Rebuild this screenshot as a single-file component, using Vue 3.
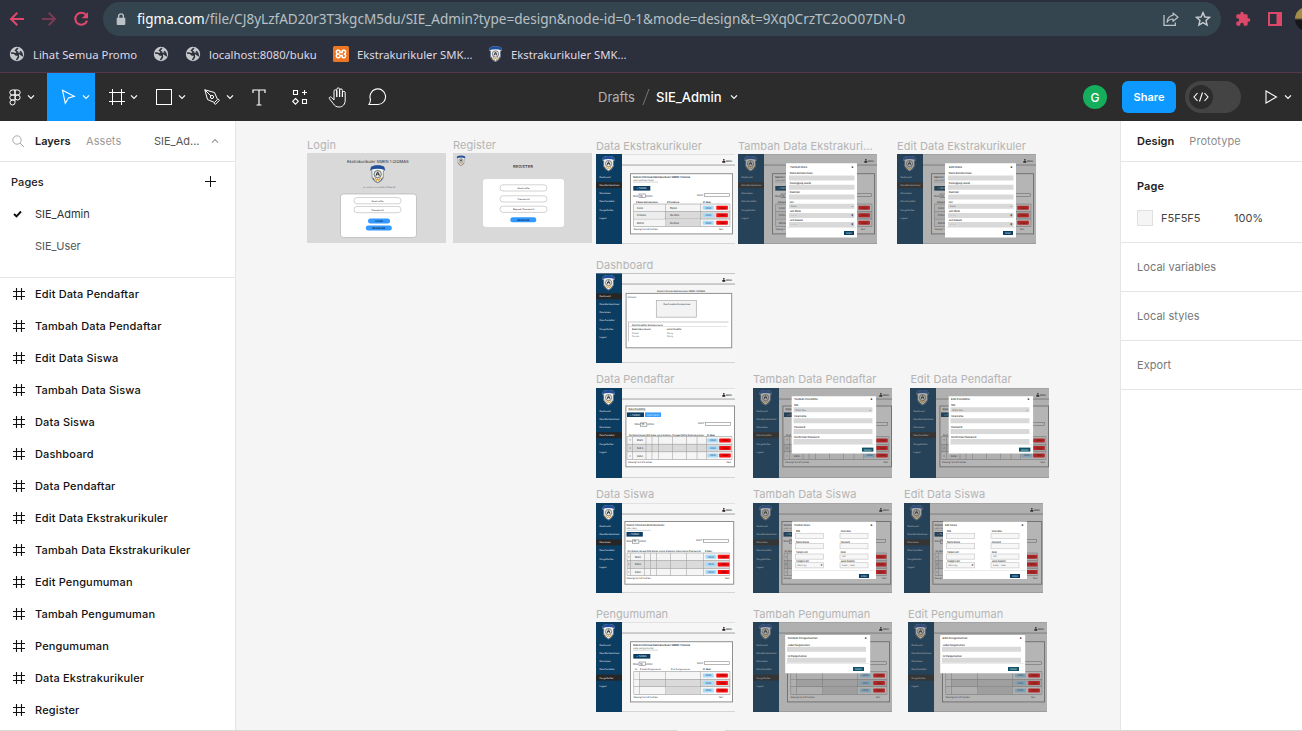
<script setup>
const layers = [
  'Edit Data Pendaftar', 'Tambah Data Pendaftar', 'Edit Data Siswa', 'Tambah Data Siswa',
  'Data Siswa', 'Dashboard', 'Data Pendaftar', 'Edit Data Ekstrakurikuler',
  'Tambah Data Ekstrakurikuler', 'Edit Pengumuman', 'Tambah Pengumuman', 'Pengumuman',
  'Data Ekstrakurikuler', 'Register'
]

const NAVY = '#0b3c61'
const GREY = '#d9d9d9'
const MENU = ['Dashboard', 'Data Ekstrakurikuler', 'Data Siswa', 'Data Pendaftar', 'Pengumuman', 'Logout']
const MENU_W = [11, 20, 11, 15, 14, 7]
const MENU_Y = [23.3, 31.2, 39.4, 47.2, 55.6, 63.6]

// Shape helpers: r = rectangle, t = text
const r = (x, y, w, h, f, extra = {}) => ({ k: 'r', x, y, w, h, f, s: 'none', rx: 0, ...extra })
const t = (x, y, v, w, extra = {}) => ({ k: 't', x, y, v, w, f: '#222', z: 2.7, b: 400, ...extra })

function shell(active) {
  const out = [
    r(0, 0, 139, 90, '#f6f6f6'),
    r(26, 0, 113, 0.5, '#ccc'),
    r(26, 10.6, 113, 0.9, '#999'),
    r(26, 89.2, 113, 0.8, '#ccc'),
    r(0, 0, 26, 90, NAVY),
    r(0, MENU_Y[active] - 3, 26, 6, '#262626'),
    r(127, 5, 1.7, 1.7, '#222', { rx: 0.8 }),
    r(126.3, 7, 3, 1.8, '#222', { rx: 0.4 }),
    t(130, 7.6, 'Admin', 6, { b: 600 })
  ]
  MENU.forEach((m, i) => out.push(t(3.5, MENU_Y[i] + 0.9, m, MENU_W[i], { f: '#f0f5fa', z: 2.5 })))
  out.push({ k: 'logo', x: 6, y: 1.8, h: 15.6 })
  return out
}
const panel = (x, y, w, h) => [
  r(x + 0.5, y + 0.5, w - 1, h - 1, '#fff', { s: '#8f8f8f' })
]

function table(c) {
  const out = []
  const [y0, y1, y2, y3] = c.rows
  const x0 = c.cols[0]
  const x1 = c.cols[c.cols.length - 1]
  out.push(r(x0, y0, x1 - x0, y3 - y0, '#f5f5f5'))
  out.push(r(x0, y1, x1 - x0, y2 - y1, '#dadada'))
  c.rows.forEach(y => out.push(r(x0, y - 0.3, x1 - x0, 0.6, '#999')))
  c.cols.forEach(x => out.push(r(x - 0.25, y0, 0.5, y3 - y0, '#999')))
  ;[[y0, y1], [y1, y2], [y2, y3]].forEach(([a, b]) => {
    const y = (a + b) / 2 - 2
    out.push(r(c.bx[0], y, 11, 4, '#a9dcfb', { rx: 0.7 }))
    out.push(t(c.bx[0] + 2.7, y + 2.9, 'Ubah', 6, { f: '#27465a' }))
    out.push(r(c.bx[1], y, 11.6, 4, '#fb0d0d', { rx: 0.7 }))
    out.push(t(c.bx[1] + 2.7, y + 2.9, 'Hapus', 6.4, { f: '#4d0000' }))
  })
  return out
}

function entries(x, y, sx) {
  return [
    t(x, y + 1, 'Show', 5.4), r(x + 6, y - 1.5, 6.4, 3.3, '#fff', { s: '#777', sw: 0.6 }),
    t(x + 7, y + 1, '10', 2.6), t(x + 13, y + 1, 'entries', 6.6),
    t(sx, y, 'Search:', 6.5), r(sx + 7.6, y - 1.8, 25, 2.8, '#fff', { s: '#888', sw: 0.6 })
  ]
}

function infoPage(active, extra) {
  return [
    ...shell(active), ...panel(34, 19.2, 103, 61.2),
    t(37, 24.2, 'Sistem Informasi Ekstrakurikuler SMKN 1 Ciomas', 57, { b: 600 }),
    t(37, 27, extra.sub, 21, { z: 2.2, f: '#666' }), r(37, 27.8, 25, 0.5, '#aaa'),
    r(37.3, 32, 17, 4.6, NAVY), t(40.5, 35.3, '+ Tambah', 10, { f: '#fff' }),
    ...entries(37, 41.5, 101), ...extra.body,
    t(37.5, 76, 'Showing 1 to 3 of 3 entries', 24, { z: 2.3 }), t(123, 76, 'Next', 4, { z: 2.3 })
  ]
}

function ekstra() {
  const body = [
    t(40, 48.6, '# Nama Ekstrakurikuler', 22, { b: 600, z: 2.4 }), t(71, 48.6, '# Pembina', 12, { b: 600, z: 2.4 }), t(107, 48.6, '# Aksi', 8, { b: 600, z: 2.4 }),
    ...table({ rows: [50, 57.5, 65, 72.4], cols: [37.6, 69.3, 104.5, 134], bx: [106.8, 120.3] }),
    r(37.9, 57.8, 31, 7, '#ededed'),
    r(69.6, 65.3, 34.7, 6.8, GREY)
  ]
  ;['Futsal', 'Pramuka', 'Rohis'].forEach((v, i) => body.push(t(41, 54.7 + i * 7.7, v, [6, 9, 7][i])))
  ;['Bapak', 'Ibu Rina', 'Ibu Dewi'].forEach((v, i) => body.push(t(74, 54.7 + i * 7.7, v, [7, 9, 9][i])))
  return infoPage(1, { sub: 'Data Ekstrakurikuler', body })
}

function pengumuman() {
  return infoPage(4, {
    sub: 'Data Pengumuman',
    body: [
      t(39, 48.2, 'No.', 3, { z: 2.4 }), t(44, 48.2, '# Judul Pengumuman', 21, { z: 2.4 }), t(75, 48.2, '# Isi Pengumuman', 19, { z: 2.4 }), t(107, 48.2, '# Aksi', 8, { b: 600, z: 2.4 }),
      ...table({ rows: [49.5, 57.3, 64.5, 72.4], cols: [37.8, 43.4, 69.4, 104.5, 134], bx: [106.8, 120.3] }),
      r(38.1, 57.6, 5, 6.6, '#f5f5f5'), r(69.7, 64.8, 34.5, 7.3, GREY)
    ]
  })
}

function pendaftar() {
  const cols = [31, 36.6, 50, 56, 62.5, 76.5, 90.5, 101, 110.5, 136]
  const out = [
    ...shell(3), ...panel(29.4, 17.5, 109.6, 61.8),
    t(32.5, 21.5, 'Data Pendaftar', 17, { b: 500 }), r(32, 22.4, 18, 0.4, '#aaa'),
    r(31, 24.4, 17, 4.6, NAVY), t(34, 27.7, '+ Tambah', 10, { f: '#fff' }),
    r(49, 24.4, 16, 4.6, '#3b9efc'), t(51, 27.7, 'Export Excel', 12, { f: '#cfe6ff' }),
    ...entries(38.5, 36.4, 102),
    t(33, 47.8, 'No  Nama Siswa   NIS   Kelas   Jenis Kelamin   Tanggal Daftar  Ekstrakurikuler', 75, { z: 2.4, b: 500 }), t(111, 47.8, '# Aksi', 8, { z: 2.4, b: 600 }),
    ...table({ rows: [48.6, 56.2, 63.8, 71.3], cols, bx: [111.2, 123.2] }),
    t(32, 75.4, 'Showing 1 to 3 of 3 entries', 24, { z: 2.3 }), t(130.5, 75.4, 'Next', 4.5, { z: 2.3 })
  ]
  ;['Rani', 'Budi A', 'Rudian'].forEach((v, i) => { out.push(t(33.5, 53.3 + i * 7.6, String(i + 1), 1)); out.push(t(41, 53.3 + i * 7.6, v, 6)) })
  return out
}

function siswa() {
  const cols = [31, 34.7, 48.5, 54.5, 60.5, 74.5, 90.5, 107.6, 133.5]
  const out = [
    ...shell(2), ...panel(28.4, 18, 109.8, 63.7),
    t(30.5, 23.2, 'Sistem Informasi Ekstrakurikuler', 38, { b: 500 }),
    t(30.5, 26, 'Data Siswa', 10, { z: 2.2, f: '#666' }), r(30.5, 26.9, 24, 0.5, '#aaa'),
    r(30.5, 29, 16.3, 4.6, NAVY), t(33, 32.3, '+ Tambah', 10, { f: '#fff' }),
    ...entries(30.5, 38.4, 100),
    t(31.5, 48.8, 'No  Nama Siswa   NIS   Kelas   Jenis Kelamin   Username      Password', 73, { z: 2.4, b: 500 }), t(109, 48.8, '# Aksi', 7, { z: 2.4, b: 600 }),
    ...table({ rows: [50, 57.6, 65.4, 72.4], cols, bx: [109.4, 121.8] }),
    t(30.5, 76, 'Showing 1 to 3 of 3 entries', 24, { z: 2.3 }), t(129, 76, 'Next', 4.5, { z: 2.3 })
  ]
  ;['Rani', 'Rizkia', 'Rudian'].forEach((v, i) => { out.push(t(32.3, 54.6 + i * 7.7, String(i + 1), 1)); out.push(t(39, 54.6 + i * 7.7, v, 6)) })
  return out
}

function dashboard() {
  return [
    ...shell(0), r(0, 0, 139, 0.5, '#aaa'),
    t(61, 19.3, 'Sistem Informasi Ekstrakurikuler SMKN 1 CIOMAS', 48, { b: 500, z: 2.4 }),
    ...panel(29.6, 19.9, 106.6, 55.4),
    t(31.5, 24.6, 'Dashboard', 8.5, { z: 2.3, f: '#555' }),
    r(60.3, 27.6, 40, 16.6, '#f3f3f3', { s: '#aaa', sw: 0.7 }),
    t(67.5, 32, 'Data Pendaftar Ekstrakurikuler', 27, { z: 2.5 }),
    r(32, 48.7, 100.5, 0.6, '#aaa'), r(32, 48.7, 0.6, 19.5, '#aaa'), r(32, 53.5, 99, 0.5, '#ccc'),
    t(36, 52.6, 'Data Pendaftar Ekstrakurikuler', 31, { z: 2.4, b: 500 }),
    t(36, 56.6, 'Ekstrakurikuler', 19, { z: 2.4, b: 500 }), t(70.5, 56.6, 'Jumlah Pendaftar', 15, { z: 2.4, b: 500 }),
    t(36, 61, 'Futsal', 6.5, { z: 2.4, f: '#666' }), t(71, 61, 'Orang', 6, { z: 2.4, f: '#666' }),
    t(36, 64.3, 'Pramuka', 7, { z: 2.4, f: '#666' }), t(71, 64.3, 'Orang', 6, { z: 2.4, f: '#666' })
  ]
}

// Text behind a dialog is cut at the dialog's left edge, or dropped when it is fully covered
function clipText(s, m) {
  if (s.k !== 't' || s.y < m.y || s.y - 2 > m.y + m.h || s.x >= m.x + m.w || s.x + s.w <= m.x) return [s]
  const room = m.x - s.x
  if (room < 1.5) return []
  const n = Math.floor(s.v.length * room / s.w)
  return n < 1 ? [] : [{ ...s, v: s.v.slice(0, n).trimEnd(), w: n * s.w / s.v.length }]
}

function modal(base, m) {
  const out = [...base.flatMap(s => clipText(s, m)), { ...r(0, 0, 139, 90, '#4b4b4b'), o: 0.41 }, r(m.x, m.y, m.w, m.h, '#fff', { rx: 0.5 })]
  out.push(t(m.tx, m.ty, m.title, m.tw, { b: 500 }))
  out.push(t(m.x + m.w - 5.5, m.ty, 'x', 1.8, { b: 800, f: '#000', z: 3.3 }))
  m.fields.forEach(([x, y, w, label, lw, val, mark]) => {
    out.push(t(x + 0.8, y - 1.1, label, lw, { b: 500, z: 2.6 }))
    out.push(m.outline ? r(x, y, w, 5.2, '#f7f7f7', { s: '#c4c4c4', sw: 0.6 }) : r(x, y, w, 5, GREY, { rx: 0.3 }))
    if (val) out.push(t(x + 2, y + 3.2, val, val.length * 1.15, { z: 2.4, f: '#555' }))
    if (mark) out.push(t(x + w - 3.3, y + 3.4, mark, 2, { z: 3, f: '#333' }))
  })
  out.push(r(m.x + 1, m.b[1] - 3.6, m.w - 2, 0.4, '#ccc'))
  out.push(r(m.b[0], m.b[1], m.b[2], 4, m.b[3] || NAVY), t(m.b[0] + 2, m.b[1] + 2.9, 'Simpan', m.b[2] - 4, { f: '#dce8f0' }))
  return out
}

const ekstraModal = title => modal(ekstra(), {
  x: 48, y: 9.2, w: 71, h: 74.2, tx: 52, ty: 13.8, title, tw: title.length > 10 ? 17 : 13,
  fields: [
    [51, 21.4, 65.5, 'Nama Ekstrakurikuler', 23], [51, 30.8, 65.5, 'Penanggung Jawab', 21],
    [51, 40.4, 65.5, 'Deskripsi', 10], [51, 49.8, 65.5, 'Hari', 4, 'Senin', '⌄'],
    [51, 59, 65.5, 'Jam Mulai', 11, '--:--', '◉'], [51, 68, 65.5, 'Jam Selesai', 13, '--:--', '◉']
  ], b: [106, 77, 10]
})
const pendaftarModal = title => modal(pendaftar(), {
  x: 38.7, y: 8.2, w: 84.4, h: 57.2, tx: 41, ty: 12, title, tw: title.length > 15 ? 24 : 19,
  fields: [
    [40.5, 19.3, 79, 'NIS', 4, 'Pilih Nis', '⌄'], [40.5, 30.2, 79, 'Username', 12],
    [40.5, 40.9, 79, 'Password', 11], [40.5, 51, 79, 'Konfirmasi Password', 25]
  ], b: [109, 59.6, 11.4, '#0f5268']
})
const siswaModal = title => modal(siswa(), {
  x: 39, y: 18.4, w: 84, h: 57.6, tx: 41, ty: 23.2, title, tw: title.length > 10 ? 16 : 12, outline: true,
  fields: [
    [42.3, 30.3, 28.4, 'NIS', 4], [87, 30.3, 28, 'Username', 10],
    [42.3, 40.6, 28.4, 'Nama Siswa', 13], [87, 40.6, 28, 'Password', 9],
    [42.3, 51, 28.4, 'Tempat Lahir', 12], [87, 51, 28, 'Kelas', 5, 'XII'],
    [42.3, 59.7, 28.4, 'Tanggal Lahir', 13, 'dd/mm/yy', '▾'], [87, 59.7, 28, 'Jenis Kelamin', 14, 'Laki - laki']
  ], b: [106, 71, 10]
})
const umumModal = title => modal(pengumuman(), {
  x: 32.2, y: 13, w: 85, h: 38.2, tx: 34.5, ty: 17.2, title, tw: title.length > 15 ? 30 : 25,
  fields: [[34, 24.8, 79, 'Judul Pengumuman', 22], [34, 35.7, 79, 'Isi Pengumuman', 19]],
  b: [100, 45, 11, '#0f5268']
})

const pill = (x, y, w, label, lw) => [r(x, y, w, 6.2, '#fff', { rx: 3, s: '#b5b5b5', sw: 0.6 }), t(x + (w - lw) / 2, y + 4, label, lw, { z: 2.5 })]
const action = (x, y, w, label, lw) => [r(x, y, w, 5, '#3399ff', { rx: 2.5 }), t(x + (w - lw) / 2, y + 3.4, label, lw, { z: 2.5, b: 600, f: '#06203c' })]
const login = [
  r(0, 0, 139, 90, GREY), t(40, 9.6, 'Ekstrakurikuler SMKN 1 CIOMAS', 61.5, { z: 4.2 }),
  { k: 'logo', x: 63, y: 12, h: 18.3 }, t(56, 34.8, 'JL. RAYA LALADON CIOMAS', 32, { z: 1.9, f: '#555' }),
  r(33.5, 41, 76, 43.5, '#fff', { rx: 3, s: '#aaa', sw: 0.6 }),
  ...pill(47, 44.6, 47, 'Username', 12), ...pill(47, 53.5, 47, 'Password', 12),
  ...action(61, 65.4, 22, 'LOGIN', 7.5), ...action(58.8, 72.5, 26, 'REGISTER', 13)
]
const register = [
  r(0, 0, 139, 90, GREY), { k: 'logo', x: 3.6, y: 2.3, h: 10.6 }, t(60, 15.3, 'REGISTER', 20, { z: 4 }),
  r(30, 26, 81, 48, '#fff', { rx: 3 }),
  ...pill(47, 31.8, 47, 'Username', 12), ...pill(47, 42.8, 47, 'Password', 12), ...pill(47, 53.2, 47, 'Repeat Password', 21),
  ...action(57.3, 64.3, 26, 'REGISTER', 12)
]

// Frames on the free canvas, positioned relative to its top-left corner
const frames = [
  { name: 'Login', x: 71, y: 32, shapes: login },
  { name: 'Register', x: 217, y: 32, shapes: register },
  { name: 'Data Ekstrakurikuler', x: 360, y: 32.6, shapes: ekstra() },
  { name: 'Tambah Data Ekstrakuri...', x: 502, y: 32.6, shapes: ekstraModal('Tambah Data') },
  { name: 'Edit Data Ekstrakurikuler', x: 661, y: 32.6, shapes: ekstraModal('Edit Data') },
  { name: 'Dashboard', x: 360, y: 152.4, shapes: dashboard() },
  { name: 'Data Pendaftar', x: 360, y: 266.6, lift: true, shapes: pendaftar() },
  { name: 'Tambah Data Pendaftar', x: 517, y: 266.6, lift: true, shapes: pendaftarModal('Tambah Pendaftar') },
  { name: 'Edit Data Pendaftar', x: 674.4, y: 266.6, lift: true, shapes: pendaftarModal('Edit Pendaftar') },
  { name: 'Data Siswa', x: 360, y: 381.5, lift: true, shapes: siswa() },
  { name: 'Tambah Data Siswa', x: 517, y: 381.5, lift: true, shapes: siswaModal('Tambah Siswa') },
  { name: 'Edit Data Siswa', x: 668, y: 381.5, lift: true, shapes: siswaModal('Edit Siswa') },
  { name: 'Pengumuman', x: 360, y: 501, shapes: pengumuman() },
  { name: 'Tambah Pengumuman', x: 517, y: 501, shapes: umumModal('Tambah Pengumuman') },
  { name: 'Edit Pengumuman', x: 672, y: 501, shapes: umumModal('Edit Pengumuman') }
]
</script>

<template>
  <div class="window">
    <svg class="defs" width="0" height="0">
      <symbol id="crest" viewBox="0 0 26 32">
        <path d="M2 3 Q13 -2 24 3 L26 9 L23 10 V22 Q21 28 13 32 Q5 28 3 22 V10 L0 9Z" fill="#f3f1ea" stroke="#56657c" stroke-width="1" />
        <path d="M2 3 Q13 -2 24 3 L26 9 Q13 4 0 9Z" fill="#1f4f9c" />
        <path d="M4 20 L8 27 L13 30 L18 27 L22 20 L21 25 Q18 29 13 31 Q8 29 5 25Z" fill="#23395e" />
        <circle cx="13" cy="16" r="6.4" fill="#e9e6df" stroke="#3c4b63" stroke-width="1.3" />
        <path d="M8 22 L11 27 L13 24 L15 27 L18 22" fill="none" stroke="#d9a23b" stroke-width="2" />
        <path d="M10 19 L13 12 L16 19 M10 16 H16" fill="none" stroke="#333" stroke-width="1.7" />
      </symbol>
      <symbol id="globe" viewBox="0 0 16 16">
        <circle cx="8" cy="8" r="7.2" fill="#c6c8cb" />
        <path d="M9 2 L6.500 4.500 L8.500 6 L7 7.500 H10.500 L13.300 9.300 Q12.600 6 10.800 5.600 M2 7 L5 7.300 L7 9 H9.200 L9.500 11 L7.500 14" fill="none" stroke="#2c303c" stroke-width="1.500" />
      </symbol>
      <symbol id="hash" viewBox="0 0 12 12">
        <path d="M3.5 0V12 M8.5 0V12 M0 3.5H12 M0 8.5H12" fill="none" stroke="currentColor" stroke-width="1.1" />
      </symbol>
      <symbol id="chev" viewBox="0 0 8 6">
        <path d="M1 1.3 L4 4.3 L7 1.3" fill="none" stroke="currentColor" stroke-width="1.2" />
      </symbol>
    </svg>

    <header class="browser">
      <div class="nav">
        <svg class="nav-icon" viewBox="0 0 16 16"><path d="M15 8H2 M8.3 1.7 L2 8 L8.3 14.3" fill="none" stroke="#e0476c" stroke-width="2" /></svg>
        <svg class="nav-icon" viewBox="0 0 16 16"><path d="M1 8H14 M7.7 1.7 L14 8 L7.7 14.3" fill="none" stroke="#7a3a53" stroke-width="2" /></svg>
        <svg class="nav-icon" viewBox="0 0 16 16"><path d="M13.2 4.2 A6 6 0 1 0 14 9.6" fill="none" stroke="#e0476c" stroke-width="2.1" /><path d="M15 1V7.2H8.8Z" fill="#e0476c" /></svg>
        <div class="address">
          <svg class="lock" width="10" height="13" viewBox="0 0 10 13"><path d="M2.6 5V3.3a2.4 2.4 0 0 1 4.8 0V5" fill="none" stroke="#bcc1c5" stroke-width="1.4" /><rect x="0.7" y="4.8" width="8.6" height="7.2" rx="1" fill="#bcc1c5" /></svg>
          <span class="url"><b>figma.com</b>/file/CJ8yLzfAD20r3T3kgcM5du/SIE_Admin?type=design&amp;node-id=0-1&amp;mode=design&amp;t=9Xq0CrzTC2oO07DN-0</span>
          <svg class="addr-icon share-icon" width="16" height="16" viewBox="0 0 16 16"><path d="M1 4V14.4H12.3V11.5" fill="none" stroke="#bcc1c5" stroke-width="1.3" /><path d="M10 2 L15 6.2 L10 10.3 V8 Q6 8 4 11.3 Q4.6 5 10 4.4Z" fill="none" stroke="#bcc1c5" stroke-width="1.2" stroke-linejoin="round" /></svg>
          <svg class="addr-icon" width="16" height="16" viewBox="0 0 16 16"><path d="M8 1.6 L9.9 6 L14.6 6.4 L11 9.5 L12.1 14.1 L8 11.6 L3.9 14.1 L5 9.5 L1.4 6.4 L6.1 6Z" fill="none" stroke="#c8ccd0" stroke-width="1.4" /></svg>
        </div>
        <svg class="puzzle" width="16" height="16" viewBox="0 0 24 24"><path d="M20.5 11H19V7a2 2 0 0 0-2-2h-4V3.5a2.5 2.5 0 0 0-5 0V5H4a2 2 0 0 0-2 2v3.8h1.5a2.7 2.7 0 0 1 0 5.4H2V20c0 1.100.9 2 2 2h3.800v-1.500a2.700 2.700 0 0 1 5.400 0V22H17a2 2 0 0 0 2-2v-4h1.500a2.500 2.500 0 0 0 0-5z" fill="#dd4869" /></svg>
        <svg class="side" width="14" height="14" viewBox="0 0 14 14"><rect x="1" y="1" width="12" height="12" fill="none" stroke="#dd4869" stroke-width="2" /><rect x="8.500" y="1" width="5" height="12" fill="#dd4869" /></svg>
        <div class="avatar"></div>
      </div>
      <nav class="bookmarks">
        <span class="mark m1"><svg width="16" height="16"><use href="#globe" /></svg>Lihat Semua Promo</span>
        <span class="mark m2"><svg width="16" height="16"><use href="#globe" /></svg></span>
        <span class="mark m3"><svg width="16" height="16"><use href="#globe" /></svg>localhost:8080/buku</span>
        <span class="mark m4"><svg width="16" height="16" viewBox="0 0 16 16"><rect width="16" height="16" rx="1.500" fill="#ee7623" /><path d="M6.500 8 H5.200 A1.900 1.900 0 1 1 6.900 5.200 L6.900 6.500 H9.100 V5.200 A1.900 1.900 0 1 1 10.800 8 A1.900 1.900 0 1 1 9.100 10.800 V9.500 H6.900 V10.800 A1.900 1.900 0 1 1 5.200 8" fill="none" stroke="#fff" stroke-width="1.500" /></svg>Ekstrakurikuler SMK...</span>
        <span class="mark m5"><svg width="15" height="16"><use href="#crest" /></svg>Ekstrakurikuler SMK...</span>
      </nav>
    </header>

    <div class="toolbar">
      <div class="tools">
        <div class="tool menu">
          <svg width="12" height="17" viewBox="0 0 12 17"><path d="M6 1H3.300a2.500 2.500 0 0 0 0 5H6Z M6 1H8.700a2.500 2.500 0 0 1 0 5H6Z M6 6H3.300a2.500 2.500 0 0 0 0 5H6Z M6 11H3.300A2.500 2.500 0 1 0 6 13.500Z" fill="none" stroke="#fff" /><circle cx="8.600" cy="8.500" r="2.500" fill="none" stroke="#fff" /></svg>
          <svg class="chev"><use href="#chev" /></svg>
        </div>
        <div class="tool active">
          <svg width="15" height="16" viewBox="0 0 15 16"><path d="M1.500 1.300 L13.300 7.300 L7.500 9 L4.300 14.300Z" fill="none" stroke="#fff" stroke-width="1.100" /></svg>
          <svg class="chev"><use href="#chev" /></svg>
        </div>
        <div class="tool">
          <svg width="16" height="16" viewBox="0 0 16 16"><path d="M3.500 0V16 M12.500 0V16 M0 3.500H16 M0 12.500H16" fill="none" stroke="#fff" /></svg>
          <svg class="chev"><use href="#chev" /></svg>
        </div>
        <div class="tool square">
          <svg width="16" height="16" viewBox="0 0 16 16"><rect x=".5" y=".5" width="15" height="15" fill="none" stroke="#fff" /></svg>
          <svg class="chev"><use href="#chev" /></svg>
        </div>
        <div class="tool square">
          <svg width="16" height="16" viewBox="0 0 16 16"><path d="M.8 .8 L10.500 3.500 L13.500 10.500 L10.500 13.500 L3.500 10.500Z M14.200 9.800 L15.300 11.500 L11.500 15.300 L9.800 14.200 M.8 .8 L7 7" fill="none" stroke="#fff" /><circle cx="8" cy="8" r="1.600" fill="none" stroke="#fff" /></svg>
          <svg class="chev"><use href="#chev" /></svg>
        </div>
        <div class="tool narrow"><svg width="14" height="17" viewBox="0 0 14 17"><path d="M1 4V1H13V4 M7 1V16 M4.500 16H9.500" fill="none" stroke="#fff" stroke-width="1.200" /></svg></div>
        <div class="tool narrow comp"><svg width="16" height="16" viewBox="0 0 16 16"><path d="M1.500 1.500H5.500V5.500H1.500Z M10.500 10.500H14.500V14.500H10.500Z M3.500 9.500L6.300 12.300L3.500 15.100L.7 12.300Z M12.500 1V6 M10 3.500H15" fill="none" stroke="#fff" stroke-width="1.100" /></svg></div>
        <div class="tool narrow"><svg width="19" height="21" viewBox="0 0 19 21"><path d="M6 11V4.200a1.400 1.400 0 0 1 2.800 0V10 V2.300a1.400 1.400 0 0 1 2.800 0V10 V3.300a1.400 1.400 0 0 1 2.800 0V10 V5.800a1.400 1.400 0 0 1 2.800 0V13c0 4-2.200 7-6 7-3 0-4.400-1-6-3.500L1.400 11.700c-.7-1.300 1.100-2.500 2.200-1.300L6 13Z" fill="none" stroke="#fff" stroke-linejoin="round" /></svg></div>
        <div class="tool narrow"><svg width="19" height="18" viewBox="0 0 19 18"><path d="M1 16.500H10A7.800 7.800 0 1 0 2.500 11.500Q2.500 14 1 16.500Z" fill="none" stroke="#fff" stroke-width="1.100" /></svg></div>
      </div>
      <div class="crumbs">
        <span class="drafts">Drafts</span>
        <svg class="slash" width="8" height="16" viewBox="0 0 8 16"><path d="M7 0L1 16" stroke="#777" /></svg>
        <span class="doc">SIE_Admin</span>
        <svg class="chev"><use href="#chev" /></svg>
      </div>
      <div class="actions">
        <div class="user">G</div>
        <button class="share">Share</button>
        <div class="dev"><div class="knob"><svg width="16" height="10" viewBox="0 0 16 10"><path d="M4.500 1 L1 5 L4.500 9 M11.500 1 L15 5 L11.500 9 M9.500 .5L6.500 9.500" fill="none" stroke="#fff" stroke-width="1.100" /></svg></div></div>
        <svg class="play" width="13" height="14" viewBox="0 0 13 14"><path d="M1 1 L11.500 7 L1 13Z" fill="none" stroke="#fff" stroke-width="1.100" /></svg>
        <svg class="chev"><use href="#chev" /></svg>
      </div>
    </div>

    <main class="workspace">
      <aside class="left">
        <div class="tabs">
          <svg width="13" height="13" viewBox="0 0 13 13"><circle cx="5" cy="5" r="4.200" fill="none" stroke="#aaa" /><path d="M8 8L12 12" stroke="#aaa" /></svg>
          <span class="tab-layers">Layers</span>
          <span class="tab-assets">Assets</span>
          <span class="tab-page">SIE_Ad...</span>
          <svg class="chev up"><use href="#chev" /></svg>
        </div>
        <section class="pages">
          <div class="pages-head"><span>Pages</span><svg width="12" height="12" viewBox="0 0 12 12"><path d="M5.500 0V11 M0 5.500H11" stroke="#111" /></svg></div>
          <div class="page"><svg width="9" height="8" viewBox="0 0 9 8"><path d="M1 4L3.500 6.300L8 1.500" fill="none" stroke="#111" stroke-width="1.900" /></svg><span>SIE_Admin</span></div>
          <div class="page idle"><span>SIE_User</span></div>
        </section>
        <ul class="layers">
          <li v-for="l in layers" :key="l"><svg width="12" height="12"><use href="#hash" /></svg>{{ l }}</li>
        </ul>
      </aside>

      <div class="canvas">
        <div v-for="f in frames" :key="f.name" class="frame" :style="{ left: f.x + 'px', top: f.y + 'px' }">
          <span class="frame-name" :class="{ lifted: f.lift }">{{ f.name }}</span>
          <svg class="art" width="139" height="90" viewBox="0 0 139 90">
            <template v-for="(s, i) in f.shapes" :key="i">
              <rect v-if="s.k === 'r'" :x="s.x" :y="s.y" :width="s.w" :height="s.h" :rx="s.rx" :fill="s.f" :stroke="s.s" :stroke-width="s.sw || 1" :opacity="s.o || 1" />
              <text v-else-if="s.k === 't'" :x="s.x" :y="s.y" :fill="s.f" :font-size="s.z" :font-weight="s.b" :textLength="s.w" lengthAdjust="spacingAndGlyphs">{{ s.v }}</text>
              <use v-else href="#crest" :x="s.x" :y="s.y" :width="s.h * 0.84" :height="s.h" />
            </template>
          </svg>
        </div>
      </div>

      <aside class="right">
        <div class="rtabs"><span class="strong">Design</span><span class="proto">Prototype</span></div>
        <section class="page-props">
          <span class="strong">Page</span>
          <div class="fill"><i class="swatch"></i><span class="hex">F5F5F5</span><span>100%</span></div>
        </section>
        <div class="row">Local variables</div>
        <div class="row">Local styles</div>
        <div class="row">Export</div>
      </aside>
    </main>
    <div class="scroll"><i></i></div>
  </div>
</template>

<style>
body { overflow: hidden; }
</style>

<style scoped>
* { box-sizing: border-box; }
.window { position: relative; width: 1302px; height: 731px; overflow: hidden; display: flex; flex-direction: column; font-family: Inter, sans-serif; font-size: 11px; letter-spacing: 0.06px; background: #fff; }
.defs { position: absolute; }
.browser { height: 73px; background: #2c303c; border-bottom: 1px solid #58354c; flex: none; font-family: "Noto Sans", "Open Sans", sans-serif; letter-spacing: 0; }
.nav { height: 38px; display: flex; align-items: center; padding-left: 9px; }
.nav-icon { width: 16px; height: 16px; margin-right: 16px; flex: none; }
.address { width: 1118px; height: 34px; margin-left: -2px; border-radius: 17px; background: #35454f; display: flex; align-items: center; padding: 0 10px 0 13px; flex: none; }
.url { margin-left: 11px; color: #b9c0c5; font-size: 13.56px; white-space: nowrap; flex: 1; }
.url b { font-weight: 400; color: #fff; }
.addr-icon { flex: none; }
.share-icon { margin-right: 16px; }
.puzzle { margin-left: 14px; flex: none; }
.side { margin-left: 17px; flex: none; }
.avatar { width: 24px; height: 24px; border-radius: 50%; margin-left: 13px; flex: none; background: linear-gradient(#a38d49 0 45%, #17171b 55%); }
.bookmarks { display: flex; align-items: center; height: 32px; padding-left: 9px; color: #dfd9e6; font-size: 11.3px; white-space: nowrap; }
.mark { display: flex; align-items: center; gap: 8px; flex: none; }
.m1 { width: 144px; }
.m2 { width: 32px; }
.m3 { width: 148px; }
.m4 { width: 155px; }
.toolbar { height: 48px; flex: none; background: #2c2c2c; display: flex; align-items: center; color: #fff; }
.tools { display: flex; width: 598px; flex: none; }
.tool { width: 48px; height: 48px; display: flex; align-items: center; padding-left: 14px; gap: 5px; }
.tool.menu { width: 47px; padding-left: 9px; gap: 6px; }
.tool.active { background: #0d99ff; gap: 6px; }
.tool.square { padding-left: 13px; gap: 6px; }
.tool.narrow { width: 40px; padding: 0 1px 0 0; justify-content: center; }
.tool.narrow:nth-last-child(2) { padding-right: 3px; }
.tool.narrow:last-child { padding-right: 3px; }
.tool.comp { padding: 0 0 0 1px; }
.chev { width: 8px; height: 6px; flex: none; }
.crumbs { display: flex; align-items: center; font-size: 13px; letter-spacing: 0; white-space: nowrap; flex: 1; }
.drafts { color: #b3b3b3; width: 44px; }
.slash { margin-right: 6px; }
.doc { width: 74px; font-weight: 500; }
.actions { display: flex; align-items: center; width: 219px; flex: none; }
.user { width: 24px; height: 24px; border-radius: 50%; background: #14ae5c; font-size: 12px; font-weight: 500; display: grid; place-items: center; }
.share { margin-left: 15px; width: 54px; height: 32px; border: 0; border-radius: 6px; background: #0d99ff; color: #fff; font: 600 11px Inter, sans-serif; padding: 0; }
.dev { margin-left: 9px; width: 56px; height: 32px; border-radius: 16px; background: #444; padding: 4px; }
.knob { width: 24px; height: 24px; border-radius: 50%; background: #2c2c2c; display: grid; place-items: center; }
.play { margin-left: 24px; margin-right: 6px; }
.workspace { display: flex; flex: 1; min-height: 0; }
.left { width: 236px; border-right: 1px solid #e5e5e5; flex: none; color: #222; overflow: hidden; }
.tabs { height: 41px; border-bottom: 1px solid #e5e5e5; display: flex; align-items: center; padding-left: 12px; color: #888; }
.tab-layers { margin-left: 10px; width: 51px; color: #222; font-weight: 600; letter-spacing: 0; }
.tab-assets { width: 68px; color: #999; }
.tab-page { width: 57px; color: #555; letter-spacing: 0; }
.up { transform: rotate(180deg); color: #999; }
.pages { height: 116px; border-bottom: 1px solid #e5e5e5; padding-top: 4px; }
.pages-head { display: flex; justify-content: space-between; align-items: center; height: 32px; padding: 0 18px 0 11px; font-weight: 500; }
.page { height: 32px; display: flex; align-items: center; padding-left: 13px; color: #333; letter-spacing: 0; }
.page svg { margin-right: 13px; }
.idle { padding-left: 35px; color: #555; }
.layers { list-style: none; margin: 0; padding: 0; letter-spacing: 0.15px; }
.layers li { height: 32px; display: flex; align-items: center; gap: 10px; padding-left: 13px; font-weight: 500; color: #111; white-space: nowrap; }
.canvas { position: relative; flex: 1; background: #f5f5f5; overflow: hidden; }
.frame { position: absolute; width: 139px; height: 90px; }
.frame-name { position: absolute; left: 0; bottom: 91px; font-size: 11px; line-height: 14px; color: #b4b4b4; white-space: nowrap; }
.frame-name.lifted { bottom: 92px; }
.art { display: block; font-family: Inter, sans-serif; letter-spacing: 0; text-rendering: geometricPrecision; overflow: hidden; }
.right { width: 182px; flex: none; border-left: 1px solid #e5e5e5; color: #777; }
.strong { color: #1e1e1e; font-weight: 600; }
.rtabs { height: 41px; display: flex; align-items: center; padding-left: 16px; border-bottom: 1px solid #e5e5e5; }
.proto { margin-left: 15px; color: #8c8c8c; }
.page-props { height: 81px; padding: 16px 0 0 16px; border-bottom: 1px solid #e5e5e5; line-height: 16px; }
.fill { margin-top: 16px; display: flex; align-items: center; color: #444; letter-spacing: 0; }
.swatch { width: 16px; height: 16px; background: #f5f5f5; border: 1px solid #e0e0e0; margin-right: 8px; }
.hex { width: 73px; }
.row { height: 49px; display: flex; align-items: center; padding-left: 16px; border-bottom: 1px solid #e5e5e5; }
.scroll { position: absolute; left: 0; right: 0; bottom: 0; height: 1px; background: #d8d8d8; }
.scroll i { display: block; width: 48px; height: 1px; margin-left: 677px; background: #f2f2f2; }
</style>
